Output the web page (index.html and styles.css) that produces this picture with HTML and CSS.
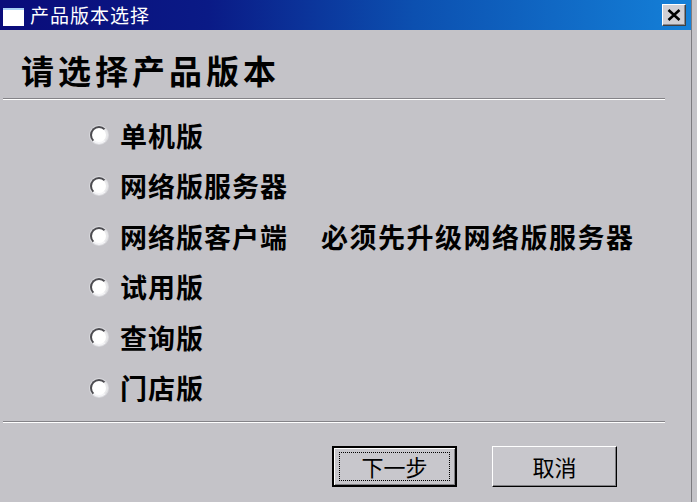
FILE: index.html
```html
<!DOCTYPE html>
<html lang="zh-CN">
<head>
    <meta charset="utf-8">
    <link rel="stylesheet" href="styles.css">
    <title>产品版本选择</title>
</head>
<body>
    <div class="window">
        <div class="titlebar">
            <span class="title-icon"></span>
            <span class="title-text">产品版本选择</span>
            <button class="close-button">
                <svg width="14" height="12" viewBox="0 0 14 12">
                    <path d="M1.5 1 L12.5 11 M12.5 1 L1.5 11" stroke="#000" stroke-width="2.6" fill="none"/>
                </svg>
            </button>
        </div>
        <div class="heading">请选择产品版本</div>
        <div class="separator"></div>
        <div class="options">
            <label class="option"><span class="radio"></span><span class="label">单机版</span></label>
            <label class="option"><span class="radio"></span><span class="label">网络版服务器</span></label>
            <label class="option"><span class="radio"></span><span class="label">网络版客户端</span><span class="note">必须先升级网络版服务器</span></label>
            <label class="option"><span class="radio"></span><span class="label">试用版</span></label>
            <label class="option"><span class="radio"></span><span class="label">查询版</span></label>
            <label class="option"><span class="radio"></span><span class="label">门店版</span></label>
        </div>
        <div class="separator lower"></div>
        <div class="buttons">
            <button class="win-button default"><span class="focus">下一步</span></button>
            <button class="win-button"><span class="focus-none">取消</span></button>
        </div>
    </div>
</body>
</html>
```

FILE: styles.css
```css
body {
    margin: 0;
    background-color: #c4c3c8;
    font-family: "Noto Sans CJK SC", "Noto Sans", sans-serif;
    overflow: hidden;
}

.window {
    width: 691px;
    height: 502px;
    border-right: 1px solid #7c7b80;
    background-color: #c4c3c8;
}

.titlebar {
    height: 30px;
    display: flex;
    align-items: center;
    background: linear-gradient(to right, #0a0c7a 0%, #0a1a86 30%, #0c50b0 60%, #1480d8 100%);
}

.title-icon {
    width: 21px;
    height: 16px;
    margin-left: 3px;
    margin-top: 3px;
    background-color: #fff;
    border-top: 2px solid #a8d0f4;
}

.title-text {
    margin-left: 6px;
    color: #fff;
    font-size: 19px;
    line-height: 22px;
    letter-spacing: 1px;
}

.close-button {
    margin-left: auto;
    margin-right: 5px;
    width: 24px;
    height: 22px;
    padding: 0;
    display: flex;
    align-items: center;
    justify-content: center;
    background-color: #d0cfd4;
    border: 1px solid;
    border-color: #fff #404040 #404040 #fff;
    box-shadow: inset -1px -1px 0 #8a898e;
}

.heading {
    margin-top: 20px;
    margin-left: 21px;
    font-size: 33px;
    line-height: 40px;
    font-weight: bold;
    letter-spacing: 4px;
    color: #000;
}

.separator {
    margin-top: 8px;
    margin-left: 3px;
    width: 662px;
    border-top: 1px solid #848388;
    border-bottom: 1px solid #fff;
}

.separator.lower {
    margin-top: 8px;
}

.options {
    margin-top: 10px;
    padding-left: 90px;
    display: flex;
    flex-direction: column;
}

.option {
    height: 50.5px;
    display: flex;
    align-items: center;
}

.radio {
    width: 14px;
    height: 14px;
    border-radius: 50%;
    background-color: #fff;
    border: 2px solid;
    border-color: #4c4b50 #e8e8ea #f4f4f6 #4c4b50;
    box-shadow: 0 0 0 1px #dadade;
}

.label,
.note {
    margin-left: 12px;
    font-size: 27px;
    font-weight: bold;
    letter-spacing: 1px;
    color: #000;
}

.note {
    margin-left: 33px;
    letter-spacing: 1.5px;
}

.buttons {
    margin-top: 23px;
    padding-left: 332px;
    display: flex;
    gap: 35px;
}

.win-button {
    width: 125px;
    height: 41px;
    padding: 0;
    background-color: #c8c7cc;
    border: 1px solid;
    border-color: #fff #000 #000 #fff;
    box-shadow: inset -1px -1px 0 #808084;
    font-family: "Noto Sans CJK SC", "Noto Sans", sans-serif;
    font-size: 22px;
    color: #000;
    display: flex;
    align-items: center;
    justify-content: center;
}

.win-button.default {
    border: 2px solid #000;
    box-shadow: inset 1px 1px 0 #fff, inset -1px -1px 0 #808084;
}

.focus {
    width: 109px;
    height: 27px;
    border: 1px dotted #000;
    display: flex;
    align-items: center;
    justify-content: center;
    line-height: 27px;
}

.focus-none {
    line-height: 27px;
}
```
